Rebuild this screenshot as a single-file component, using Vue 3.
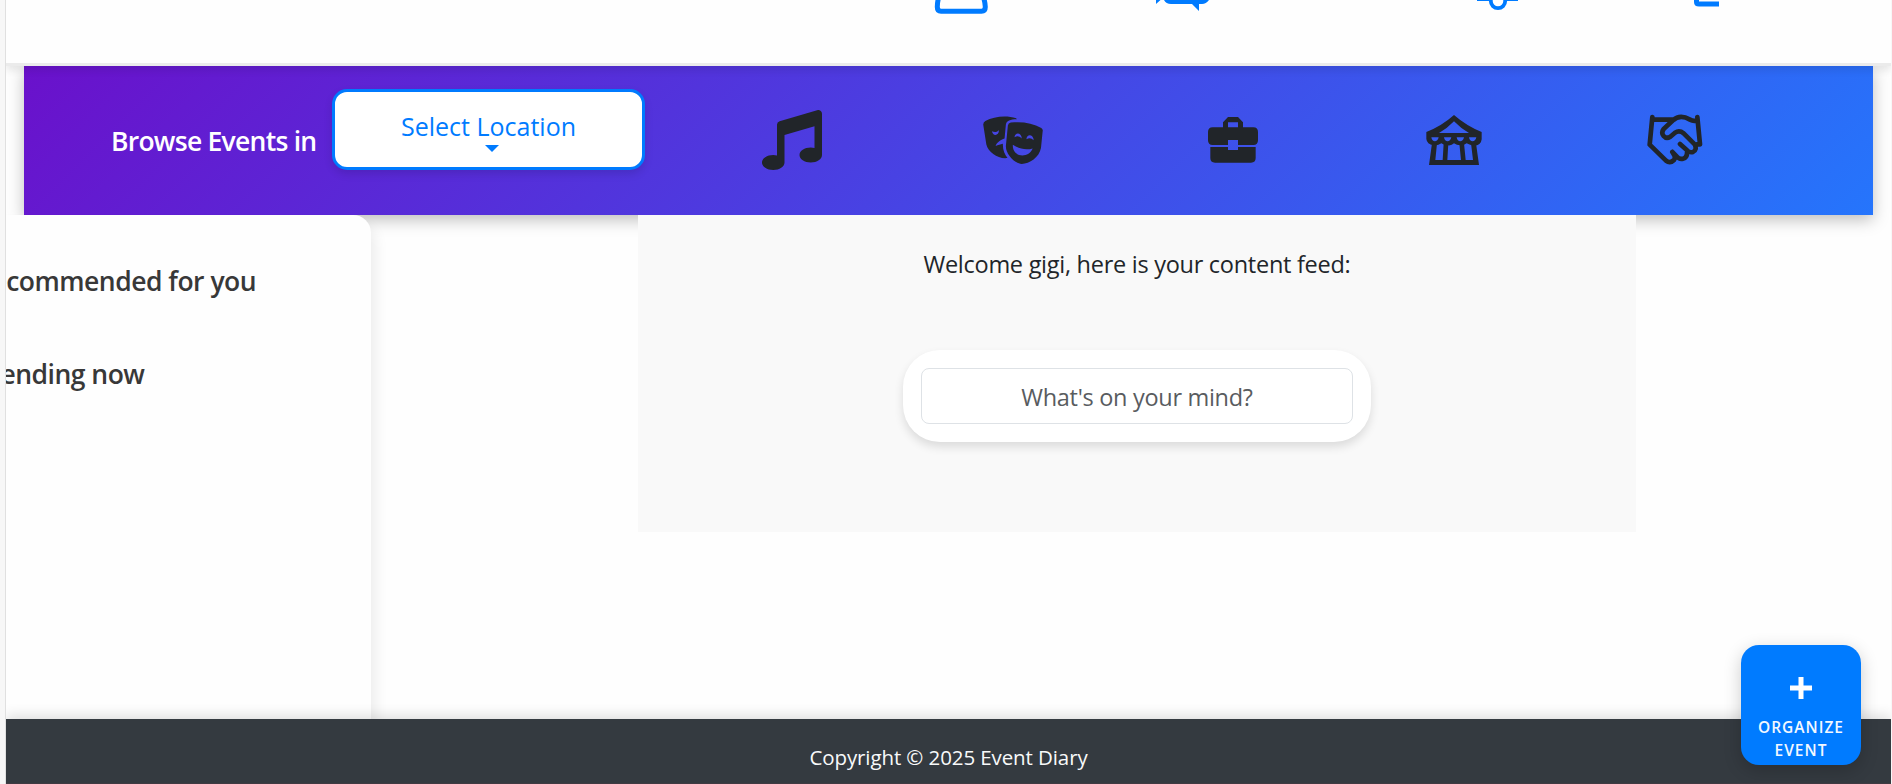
<script setup>
const suggestions = ['Recommended for you', 'Trending now']
</script>

<template>
  <div class="screen">
    <div class="page">
      <header class="header">
        <nav class="top-icons">
          <svg class="user" width="54" height="15" viewBox="0 0 54 15"><path d="M6 -6Q3.300 0 3.300 7Q3.300 11.300 7 11.300H47.500Q51.300 11.300 51.300 7Q51 0 48 -6" fill="none" stroke="currentColor" stroke-width="5" /></svg>
          <svg class="chat" width="54" height="15" viewBox="0 0 54 15"><path d="M0 0H4.500L0 4ZM8 0H53Q50 4 46 4H43V11L36 4H15Q10 4 8 0Z" fill="currentColor" /></svg>
          <svg class="bell" width="42" height="15" viewBox="0 0 42 15"><path d="M0 0H41V1H0Z" fill="currentColor" /><circle cx="21" cy="1" r="7.200" fill="#fff" stroke="currentColor" stroke-width="3.800" /></svg>
          <svg class="exit" width="26" height="15" viewBox="0 0 26 15"><path d="M0 0H5V1.500H25V6.500H5Q0 6.500 0 2Z" fill="currentColor" /></svg>
        </nav>
      </header>

      <section class="browse">
        <span class="browse-label">Browse Events in</span>
        <button class="location">
          <span>Select Location</span>
          <i class="caret"></i>
        </button>
        <div class="categories">
          <svg class="music" width="60" height="60" viewBox="0 0 512 512"><path fill="currentColor" d="M470.380 1.510L150.410 96A32 32 0 0 0 128 126.510v261.410A139 139 0 0 0 96 384c-53 0-96 28.660-96 64s43 64 96 64 96-28.660 96-64V214.320l256-75v184.610a138.400 138.400 0 0 0-32-3.930c-53 0-96 28.660-96 64s43 64 96 64 96-28.650 96-64V32a32 32 0 0 0-41.620-30.490z" /></svg>
          <svg class="masks" width="60" height="48" viewBox="729 77 181 145">
            <path fill="currentColor" fill-rule="evenodd" d="M730 106Q728 97 736 92C762 78 800 74 829 84L831 87C811 87 800 91 798 103L794 145C782 149 770 157 767 168C775 164 781 164 789 161C788 179 794 193 803 204C775 208 745 187 739 163ZM756 123C758 139 778 138 777 119C771 127 763 126 756 123Z" />
            <path fill="currentColor" fill-rule="evenodd" d="M813 97C845 93 879 98 905 113Q911 117 909 124L904 174C899 202 869 222 846 222C823 220 797 191 798 168L804 106Q805 98 813 97ZM824 141C834 136 839 139 846 145C845 127 826 125 824 141ZM860 147C869 142 875 143 882 150C881 131 861 130 860 147ZM819 164C817 203 867 206 879 175C858 181 838 176 819 164Z" />
          </svg>
          <svg class="briefcase" width="50" height="46" viewBox="84 81 150 138"><path fill="currentColor" fill-rule="evenodd" d="M129 112V97L144 81H174L189 97V112H220Q234 112 234 126V151Q234 165 220 165H174V150H144V165H98Q84 165 84 151V126Q84 112 98 112ZM144 112H174V97H144ZM91 171H144V180H174V171H227V204Q227 218 213 218H105Q91 218 91 204Z" /></svg>
          <svg class="tent" width="56" height="50" viewBox="738 75 168 150">
            <path fill="currentColor" fill-rule="evenodd" d="M822 75Q860 108 905 126V148Q903 166 885 167H881Q870 166 860 160Q850 168 841 166Q830 166 822 160Q814 168 803 166Q792 166 784 160Q774 168 760 166Q741 163 739 147V126Q785 108 822 75ZM777 129H867Q843 116 822 94Q801 116 777 129ZM754 142C756 158 773 158 776 142ZM792 142C794 158 811 158 814 142ZM830 142C832 158 849 158 852 142ZM867 142C869 158 886 158 889 142Z" />
            <path fill="currentColor" d="M756 160H771L766 210H788L791 160H805L802 210H843L838 160H852L857 210H879L873 160H888L897 225H747Z" />
          </svg>
          <svg class="handshake" width="56" height="52" viewBox="141 73 168 156"><path fill="none" stroke="currentColor" stroke-width="14" stroke-linecap="round" stroke-linejoin="round" d="M157 82L149 165L198 213Q210 223 222 211Q227 204 222 195L217 187M157 90H222M292 82L300 164H290M292 92Q281 96 270 90Q240 73 219 92L191 118C180 133 195 151 211 141L225 129Q238 121 251 131L284 164Q292 181 279 187Q269 190 261 182L240 163M261 182Q263 204 249 207Q238 210 230 200L217 187" /></svg>
        </div>
      </section>

      <div class="content">
        <aside class="sidebar">
          <h2 v-for="title in suggestions" :key="title">{{ title }}</h2>
        </aside>
        <main class="feed">
          <p>Welcome gigi, here is your content feed:</p>
          <div class="composer">
            <input type="text" placeholder="What's on your mind?" />
          </div>
        </main>
      </div>

      <footer class="footer">Copyright © 2025 Event Diary</footer>

      <button class="organize">
        <svg width="24" height="24" viewBox="0 0 24 24"><path d="M12 1V23M1 12H23" stroke="#fff" stroke-width="5" /></svg>
        <span>ORGANIZE</span>
        <span>EVENT</span>
      </button>
    </div>
  </div>
</template>

<style>
body { margin: 0; overflow: hidden; }
</style>

<style scoped>
* { box-sizing: border-box; }
.screen {
  width: 1892px;
  height: 784px;
  padding: 0 1px 0 5px;
  background: #f7f7f7;
  overflow: hidden;
  font-family: "Open Sans", "Noto Sans", sans-serif;
}
.page {
  position: relative;
  width: 1886px;
  height: 784px;
  border-left: 1px solid #e0e0e0;
  background: #fefefe;
  overflow: hidden;
  display: flex;
  flex-direction: column;
}
.header {
  position: relative;
  z-index: 3;
  flex: none;
  height: 66px;
  border-bottom: 3px solid #ebebeb;
  background: #fefefe;
  box-shadow: 0 4px 8px rgba(0, 0, 0, 0.1);
}
.top-icons { display: flex; color: #007bff; padding-left: 928px; }
.top-icons svg { display: block; }
.chat { margin-left: 168px; }
.bell { margin-left: 267px; }
.exit { margin-left: 175px; }
.browse {
  position: relative;
  z-index: 1;
  flex: none;
  display: flex;
  align-items: flex-start;
  height: 149px;
  margin: 0 18px;
  background: linear-gradient(135deg, #6a11cb 0%, #2575fc 100%);
  box-shadow: 0 5px 15px rgba(0, 0, 0, 0.25);
}
.browse-label {
  width: 221px;
  margin: 56px 0 0 87px;
  color: #fff;
  font-size: 26.5px;
  font-weight: 600;
  line-height: 38px;
  letter-spacing: -0.74px;
  white-space: nowrap;
}
.location {
  display: flex;
  flex-direction: column;
  align-items: center;
  width: 313px;
  height: 81px;
  margin-top: 23px;
  padding: 16px 0 0;
  border: 3px solid #007bff;
  border-radius: 15px;
  background: #fff;
  box-shadow: 0 4px 8px rgba(0, 0, 0, 0.12);
  color: #007bff;
  font: 25px/36px "Open Sans", "Noto Sans", sans-serif;
  letter-spacing: 0;
}
.caret {
  margin: 1px 0 0 6px;
  border: 7px solid transparent;
  border-top-color: #007bff;
  border-bottom: 0;
}
.categories { display: flex; color: #212529; }
.categories svg { display: block; }
.music { margin: 44px 0 0 117px; }
.masks { margin: 50px 0 0 161px; }
.briefcase { margin: 51px 0 0 165px; }
.tent { margin: 49px 0 0 168px; }
.handshake { margin: 48px 0 0 165px; }
.content { flex: 1; display: flex; min-height: 0; }
.sidebar {
  position: relative;
  z-index: 2;
  flex: none;
  width: 396px;
  margin-left: -31px;
  padding-top: 48px;
  border-radius: 0 18px 0 0;
  background: #fefefe;
  box-shadow: 4px 10px 14px rgba(0, 0, 0, 0.08);
}
.sidebar h2 {
  margin: 0 0 57px;
  color: #383838;
  font-size: 26.5px;
  font-weight: 600;
  line-height: 36px;
  letter-spacing: -0.5px;
  white-space: nowrap;
}
.feed {
  position: relative;
  z-index: 2;
  width: 998px;
  height: 317px;
  margin-left: 267px;
  padding-top: 31px;
  background: #f9f9f9;
  display: flex;
  flex-direction: column;
  align-items: center;
}
.feed p {
  margin: 0 0 68px;
  color: #212529;
  font-size: 23.5px;
  line-height: 36px;
  letter-spacing: -0.27px;
  white-space: nowrap;
}
.composer {
  width: 468px;
  height: 92px;
  padding: 18px;
  border-radius: 37px;
  background: #fff;
  box-shadow: 0 5px 10px rgba(0, 0, 0, 0.12);
}
.composer input {
  display: block;
  width: 432px;
  height: 56px;
  padding: 1px 10px 0;
  border: 1px solid #dee2e6;
  border-radius: 8px;
  background: #fff;
  text-align: center;
  font: 23.5px "Open Sans", "Noto Sans", sans-serif;
  letter-spacing: -0.3px;
}
.composer input::placeholder { color: #595c5f; opacity: 1; }
.footer {
  position: relative;
  z-index: 3;
  flex: none;
  height: 65px;
  padding-top: 22px;
  border-bottom: 1px solid #403a42;
  background: #343a40;
  box-shadow: 0 -4px 12px rgba(0, 0, 0, 0.12);
  color: #f8f9fa;
  font-size: 20.5px;
  line-height: 32px;
  letter-spacing: -0.1px;
  text-align: center;
}
.organize {
  position: absolute;
  z-index: 4;
  right: 30px;
  top: 645px;
  display: flex;
  flex-direction: column;
  align-items: center;
  width: 120px;
  height: 120px;
  padding: 31px 0 0;
  border: 0;
  border-radius: 18px;
  background: #007bff;
  box-shadow: 0 5px 18px rgba(0, 0, 0, 0.2);
  color: #f3f8ff;
  font: 600 15.5px/23px "Open Sans", "Noto Sans", sans-serif;
  letter-spacing: 1px;
}
.organize svg { margin-bottom: 16px; }
</style>
